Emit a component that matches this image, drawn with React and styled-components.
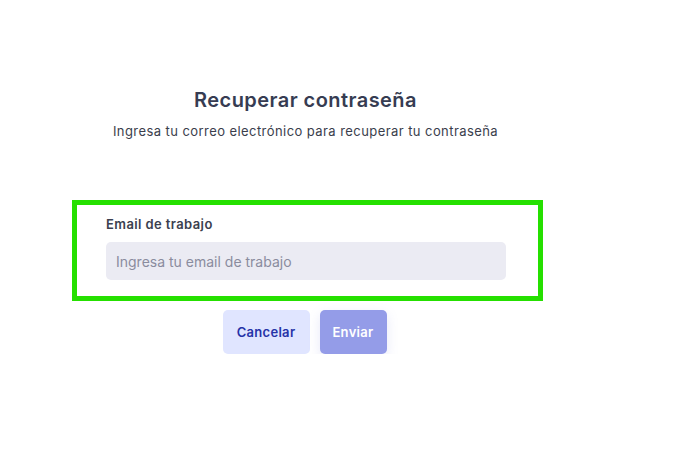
import React from "react";
import styled, { createGlobalStyle } from "styled-components";

const Global = createGlobalStyle`
  html, body { margin: 0; padding: 0; background: #ffffff; }
  body { font-family: "Inter", "Open Sans", sans-serif; }
`;

const Page = styled.div`
  width: 611px;
  display: flex;
  flex-direction: column;
  align-items: center;
  padding-top: 87px;
`;

const Title = styled.h1`
  margin: 0;
  font-size: 20px;
  font-weight: 600;
  letter-spacing: 0.45px;
  color: #363c52;
  line-height: 26px;
`;

const Subtitle = styled.p`
  margin: 9px 0 0;
  font-size: 13px;
  letter-spacing: 0.43px;
  color: #3a3e4c;
  line-height: 18px;
`;

const Card = styled.form`
  margin-top: 60px;
  width: 471px;
  box-sizing: border-box;
  border: 5px solid #25e000;
  padding: 10px 32px 16px 29px;
  display: flex;
  flex-direction: column;
  margin-left: 4px;
`;

const Label = styled.label`
  font-size: 13px;
  font-weight: 600;
  letter-spacing: 0.4px;
  color: #3b3f4f;
  line-height: 18px;
`;

const Input = styled.input`
  margin-top: 9px;
  height: 38px;
  width: 400px;
  box-sizing: border-box;
  border: none;
  border-radius: 5px;
  background: #ebebf3;
  padding: 0 10px;
  font-family: inherit;
  font-size: 14px;
  color: #3b3f4f;
  caret-color: #2a2d3a;
  outline: none;
  &::placeholder { color: #8a8c9e; }
`;

const Actions = styled.div`
  margin-top: 9px;
  margin-left: -2px;
  display: flex;
  gap: 10px;
`;

const Button = styled.button`
  height: 44px;
  border: none;
  border-radius: 5px;
  font-family: inherit;
  font-size: 13px;
  font-weight: 600;
  letter-spacing: 0.3px;
  padding: 0;
  cursor: pointer;
  background: ${(p) => (p.$primary ? "#949ce8" : "#e0e5ff")};
  color: ${(p) => (p.$primary ? "#ffffff" : "#2633a8")};
  box-shadow: ${(p) => (p.$primary ? "0 4px 12px rgba(120,130,220,0.18)" : "none")};
  width: ${(p) => p.$w}px;
`;

export default function App() {
  return (
    <>
      <Global />
      <Page>
        <Title>Recuperar contraseña</Title>
        <Subtitle>Ingresa tu correo electrónico para recuperar tu contraseña</Subtitle>
        <Card onSubmit={(e) => e.preventDefault()}>
          <Label htmlFor="email">Email de trabajo</Label>
          <Input id="email" autoFocus placeholder="Ingresa tu email de trabajo" />
        </Card>
        <Actions>
          <Button type="button" $w={87}>Cancelar</Button>
          <Button type="button" $primary $w={67}>Enviar</Button>
        </Actions>
      </Page>
    </>
  );
}
